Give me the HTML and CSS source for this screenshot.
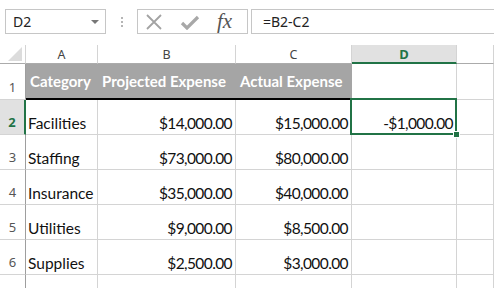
FILE: index.html
```html
<!DOCTYPE html>
<html lang="en">
<head>
  <meta charset="UTF-8">
  <meta name="viewport" content="width=device-width, initial-scale=1.0">
  <title>Expenses</title>
  <link rel="stylesheet" href="styles.css">
</head>
<body>

<div class="toolbar">
  <div class="namebox">
    <span>D2</span>
    <span class="arrow"></span>
  </div>
  <div class="grip"><i></i><i></i><i></i></div>
  <div class="fxbtns">
    <svg class="icon-x" width="18" height="16" viewBox="0 0 18 16">
      <path d="M2 1 L16 15 M16 1 L2 15" stroke="#a3a3a3" stroke-width="1.8" fill="none"/>
    </svg>
    <svg class="icon-check" width="20" height="16" viewBox="0 0 20 16">
      <path d="M2 9 L7 14 L18 3" stroke="#a8a8a8" stroke-width="3.2" fill="none"/>
    </svg>
    <span class="fx">fx</span>
  </div>
  <div class="formula">=B2-C2</div>
</div>

<div class="sheet">
  <!-- cabeçalho das colunas -->
  <div class="corner">
    <svg width="14" height="14" viewBox="0 0 14 14"><polygon points="14,0 14,14 0,14" fill="#dcdcdc"/></svg>
  </div>
  <div class="colhead">A</div>
  <div class="colhead">B</div>
  <div class="colhead">C</div>
  <div class="colhead active">D</div>
  <div class="colhead"></div>

  <!-- linha 1 -->
  <div class="rowhead">1</div>
  <div class="cell title left">Category</div>
  <div class="cell title left">Projected Expense</div>
  <div class="cell title left">Actual Expense</div>
  <div class="cell"></div>
  <div class="cell"></div>

  <!-- linha 2 -->
  <div class="rowhead active">2</div>
  <div class="cell">Facilities</div>
  <div class="cell num">$14,000.00</div>
  <div class="cell num">$15,000.00</div>
  <div class="cell num selected">-$1,000.00<span class="sel-box"><span class="handle"></span></span></div>
  <div class="cell"></div>

  <div class="rowhead">3</div>
  <div class="cell">Staffing</div>
  <div class="cell num">$73,000.00</div>
  <div class="cell num">$80,000.00</div>
  <div class="cell"></div>
  <div class="cell"></div>

  <div class="rowhead">4</div>
  <div class="cell">Insurance</div>
  <div class="cell num">$35,000.00</div>
  <div class="cell num">$40,000.00</div>
  <div class="cell"></div>
  <div class="cell"></div>

  <div class="rowhead">5</div>
  <div class="cell">Utilities</div>
  <div class="cell num">$9,000.00</div>
  <div class="cell num">$8,500.00</div>
  <div class="cell"></div>
  <div class="cell"></div>

  <div class="rowhead">6</div>
  <div class="cell">Supplies</div>
  <div class="cell num">$2,500.00</div>
  <div class="cell num">$3,000.00</div>
  <div class="cell"></div>
  <div class="cell"></div>

  <div class="rowhead"></div>
  <div class="cell"></div>
  <div class="cell"></div>
  <div class="cell"></div>
  <div class="cell"></div>
  <div class="cell"></div>
</div>

</body>
</html>
```

FILE: styles.css
```css
/* Página */
body {
  margin: 0;
  width: 494px;
  height: 288px;
  overflow: hidden;
  background: #fff;
  font-family: Lato, "Open Sans", sans-serif;
}

/* Barra de fórmulas */
.toolbar {
  display: flex;
  align-items: flex-start;
  height: 45px;
  padding: 9px 0 0 5px;
  box-sizing: border-box;
}
.namebox {
  display: flex;
  align-items: center;
  justify-content: space-between;
  width: 101px;
  height: 25px;
  padding: 0 6px 0 7px;
  box-sizing: border-box;
  border: 1px solid #c6c6c6;
  font-family: "Noto Sans", sans-serif;
  font-size: 14px;
  color: #222;
}
.arrow {
  width: 0;
  height: 0;
  border-left: 4px solid transparent;
  border-right: 4px solid transparent;
  border-top: 4px solid #777;
}
.grip {
  display: flex;
  flex-direction: column;
  gap: 2px;
  width: 31px;
  padding-top: 8px;
  align-items: center;
}
.grip i {
  display: block;
  width: 2px;
  height: 2px;
  background: #b5b5b5;
}
.fxbtns {
  display: flex;
  align-items: center;
  width: 111px;
  height: 25px;
  box-sizing: border-box;
  border: 1px solid #c6c6c6;
  padding-left: 7px;
}
.icon-check {
  margin-left: 17px;
}
.fx {
  margin-left: 17px;
  font-family: "Liberation Serif", serif;
  font-style: italic;
  font-size: 21px;
  color: #555;
  line-height: 1;
}
.formula {
  flex: 1;
  height: 25px;
  margin-left: 3px;
  margin-right: -10px;
  box-sizing: border-box;
  border: 1px solid #c6c6c6;
  padding-left: 11px;
  font-family: "Noto Sans", sans-serif;
  font-size: 14px;
  line-height: 23px;
  color: #222;
}

/* Planilha */
.sheet {
  display: grid;
  grid-template-columns: 26px 72px 138px 116px 105px 1fr;
  grid-template-rows: 19px 36px repeat(5, 35px) 14px;
}
.corner {
  display: flex;
  align-items: flex-end;
  justify-content: flex-end;
  padding: 0 3px 2px 0;
  border-right: 1px solid #d4d4d4;
  border-bottom: 1px solid #ababab;
}
.colhead {
  display: flex;
  align-items: center;
  justify-content: center;
  border-right: 1px solid #d4d4d4;
  border-bottom: 1px solid #ababab;
  font-family: "Noto Sans", sans-serif;
  font-size: 12.5px;
  color: #444;
}
.colhead.active {
  background: #e1e1e1;
  border-bottom: 2px solid #217346;
  color: #217346;
  font-weight: bold;
  font-size: 13px;
}
.rowhead {
  display: flex;
  align-items: flex-end;
  justify-content: center;
  padding-bottom: 3px;
  border-right: 1px solid #9e9e9e;
  border-bottom: 1px solid #d4d4d4;
  font-family: "Noto Sans", sans-serif;
  font-size: 13px;
  color: #555;
}
.rowhead.active {
  background: #e1e1e1;
  border-right: 2px solid #217346;
  color: #217346;
  font-weight: bold;
}
.cell {
  display: flex;
  align-items: flex-end;
  padding: 0 3px 2px 2px;
  border-right: 1px solid #d4d4d4;
  border-bottom: 1px solid #d4d4d4;
  font-size: 15.5px;
  line-height: 18px;
  color: #111;
  white-space: nowrap;
  min-width: 0;
}
.num {
  justify-content: flex-end;
  letter-spacing: -0.6px;
}
.title {
  align-items: center;
  padding: 0 0 1px 4px;
  background: #a5a5a5;
  color: #fff;
  font-weight: bold;
  border-right: none;
  border-bottom: 2px solid #000;
  letter-spacing: 0;
  font-size: 15px;
}

/* Seleção da célula D2 */
.selected {
  position: relative;
}
.sel-box {
  position: absolute;
  top: -2px;
  left: -2px;
  right: -1px;
  bottom: -1px;
  border: 2px solid #217346;
}
.handle {
  position: absolute;
  right: -5px;
  bottom: -5px;
  width: 5px;
  height: 5px;
  background: #217346;
  border: 1px solid #fff;
}
```
